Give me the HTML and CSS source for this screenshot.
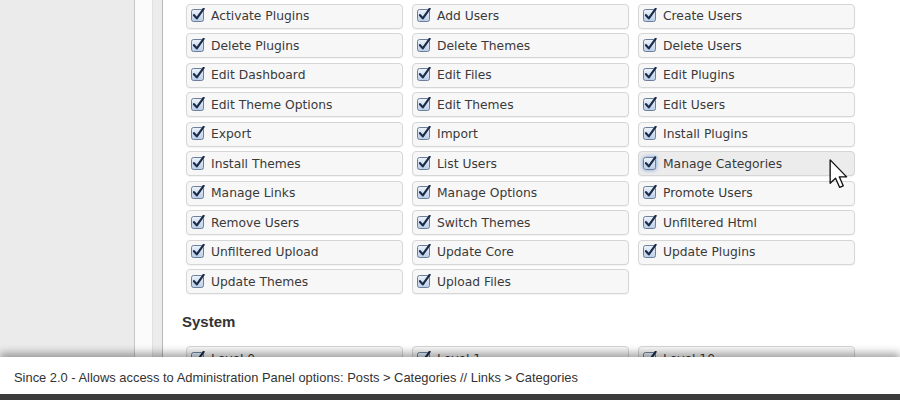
FILE: index.html
```html
<!DOCTYPE html>
<html>
<head>
<meta charset="utf-8">
<link rel="stylesheet" href="styles.css">
</head>
<body>
<svg class="defs" width="0" height="0">
  <defs>
    <linearGradient id="boxg" x1="0" y1="0" x2="0" y2="1">
      <stop offset="0" stop-color="#eef4fb"/>
      <stop offset="1" stop-color="#b9cde6"/>
    </linearGradient>
    <symbol id="chk" viewBox="0 0 14 14">
      <rect x="0.5" y="1.5" width="12" height="12" rx="2" fill="url(#boxg)" stroke="#6d7f98"/>
      <path d="M3 7.2 L5.8 10.4 L12.6 0.8" fill="none" stroke="#1b2b4a" stroke-width="2.2" stroke-linecap="round" stroke-linejoin="round"/>
    </symbol>
  </defs>
</svg>
<div class="layout">
  <div class="sidebar"></div>
  <div class="gutter"></div>
  <div class="frame-edge"></div>
  <main class="content">
    <div class="grid">
      <label class="cell"><svg class="cb"><use href="#chk"/></svg>Activate Plugins</label>
      <label class="cell"><svg class="cb"><use href="#chk"/></svg>Add Users</label>
      <label class="cell"><svg class="cb"><use href="#chk"/></svg>Create Users</label>
      <label class="cell"><svg class="cb"><use href="#chk"/></svg>Delete Plugins</label>
      <label class="cell"><svg class="cb"><use href="#chk"/></svg>Delete Themes</label>
      <label class="cell"><svg class="cb"><use href="#chk"/></svg>Delete Users</label>
      <label class="cell"><svg class="cb"><use href="#chk"/></svg>Edit Dashboard</label>
      <label class="cell"><svg class="cb"><use href="#chk"/></svg>Edit Files</label>
      <label class="cell"><svg class="cb"><use href="#chk"/></svg>Edit Plugins</label>
      <label class="cell"><svg class="cb"><use href="#chk"/></svg>Edit Theme Options</label>
      <label class="cell"><svg class="cb"><use href="#chk"/></svg>Edit Themes</label>
      <label class="cell"><svg class="cb"><use href="#chk"/></svg>Edit Users</label>
      <label class="cell"><svg class="cb"><use href="#chk"/></svg>Export</label>
      <label class="cell"><svg class="cb"><use href="#chk"/></svg>Import</label>
      <label class="cell"><svg class="cb"><use href="#chk"/></svg>Install Plugins</label>
      <label class="cell"><svg class="cb"><use href="#chk"/></svg>Install Themes</label>
      <label class="cell"><svg class="cb"><use href="#chk"/></svg>List Users</label>
      <label class="cell hover"><svg class="cb"><use href="#chk"/></svg>Manage Categories</label>
      <label class="cell"><svg class="cb"><use href="#chk"/></svg>Manage Links</label>
      <label class="cell"><svg class="cb"><use href="#chk"/></svg>Manage Options</label>
      <label class="cell"><svg class="cb"><use href="#chk"/></svg>Promote Users</label>
      <label class="cell"><svg class="cb"><use href="#chk"/></svg>Remove Users</label>
      <label class="cell"><svg class="cb"><use href="#chk"/></svg>Switch Themes</label>
      <label class="cell"><svg class="cb"><use href="#chk"/></svg>Unfiltered Html</label>
      <label class="cell"><svg class="cb"><use href="#chk"/></svg>Unfiltered Upload</label>
      <label class="cell"><svg class="cb"><use href="#chk"/></svg>Update Core</label>
      <label class="cell"><svg class="cb"><use href="#chk"/></svg>Update Plugins</label>
      <label class="cell"><svg class="cb"><use href="#chk"/></svg>Update Themes</label>
      <label class="cell"><svg class="cb"><use href="#chk"/></svg>Upload Files</label>
    </div>
    <h2 class="section-title">System</h2>
    <div class="grid">
      <label class="cell"><svg class="cb"><use href="#chk"/></svg>Level 0</label>
      <label class="cell"><svg class="cb"><use href="#chk"/></svg>Level 1</label>
      <label class="cell"><svg class="cb"><use href="#chk"/></svg>Level 10</label>
    </div>
  </main>
</div>
<svg class="cursor" width="20" height="30" viewBox="0 0 13 20">
  <path d="M0.6 0.6 L0.6 16.2 L4.2 12.8 L6.9 18.9 L9.3 17.9 L6.7 11.9 L11.6 11.9 Z" fill="#fff" stroke="#111" stroke-width="0.9" stroke-linejoin="round"/>
</svg>
<footer class="tipbar">
  <div class="tip-text">Since 2.0 - Allows access to Administration Panel options: Posts &gt; Categories // Links &gt; Categories</div>
</footer>
</body>
</html>
```
FILE: styles.css
```css
html, body {
  margin: 0;
  padding: 0;
}
body {
  width: 900px;
  height: 400px;
  overflow: hidden;
  position: relative;
  background: #fff;
  font-family: "DejaVu Sans", "Liberation Sans", sans-serif;
}
.defs {
  position: absolute;
  width: 0;
  height: 0;
}
.layout {
  display: flex;
  height: 400px;
}
.sidebar {
  width: 134px;
  background: #ebebeb;
  border-right: 1px solid #c6c6c6;
}
.gutter {
  width: 17px;
  background: #fbfbfb;
}
.frame-edge {
  width: 9px;
  background: #ececec;
  border-right: 1px solid #b9b9b9;
  border-left: 1px solid #e0e0e0;
}
.content {
  flex: 1;
  padding: 3.5px 0 0 23px;
  background: #fff;
}
.grid {
  display: grid;
  grid-template-columns: repeat(3, 217px);
  column-gap: 9px;
  row-gap: 4.5px;
}
.cell {
  box-sizing: border-box;
  height: 25px;
  display: flex;
  align-items: center;
  gap: 6px;
  padding-left: 4px;
  background: #f7f7f8;
  border: 1px solid #d6d6d6;
  border-radius: 4px;
  box-shadow: 0 1px 1px rgba(0, 0, 0, 0.05);
  font-size: 12.3px;
  color: #3a3a3a;
}
.cell.hover {
  background: #ececec;
}
.cb {
  width: 14px;
  height: 14px;
  flex: none;
  margin-top: -2px;
}
.cell.hover .cb {
  border-radius: 3px;
  filter: drop-shadow(0 0 2px rgba(90, 140, 215, 0.85));
}
.section-title {
  margin: 19px 0 15px -4px;
  font-family: "Liberation Sans", Arial, sans-serif;
  font-size: 15px;
  line-height: 18px;
  font-weight: bold;
  color: #333;
}
.cursor {
  position: absolute;
  left: 829px;
  top: 159px;
}
.tipbar {
  position: absolute;
  left: 0;
  right: 0;
  bottom: 0;
  height: 43px;
  box-sizing: border-box;
  background: #fff;
  border-bottom: 6px solid #3b3b3b;
  box-shadow: 0 -4px 8px rgba(0, 0, 0, 0.35);
}
.tip-text {
  padding: 4px 0 0 14px;
  line-height: 33px;
  font-family: "Liberation Sans", Arial, sans-serif;
  font-size: 12.9px;
  color: #333;
}
```
